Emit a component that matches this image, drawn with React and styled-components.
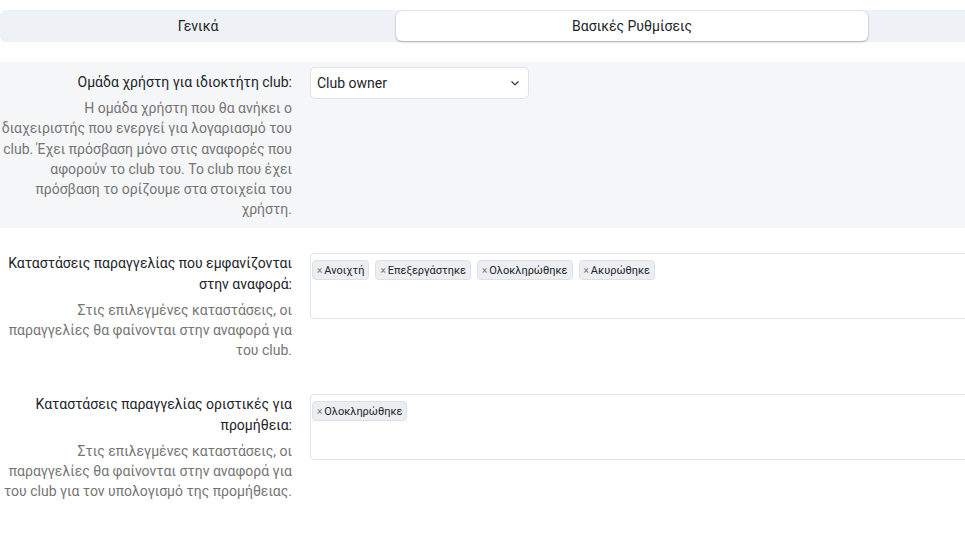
import React from 'react';
import styled, { createGlobalStyle } from 'styled-components';

const GlobalStyle = createGlobalStyle`
  *, *::before, *::after {
    box-sizing: border-box;
  }
  body {
    margin: 0;
    background: #fff;
    font-family: Roboto, "Noto Sans", Arial, sans-serif;
    color: #212529;
    overflow: hidden;
  }
`;

const Page = styled.div`
  width: 1140px;
  padding-top: 10px;
`;

const TabBar = styled.div`
  display: flex;
  background: #eef1f6;
  border-radius: 6px;
  padding: 1px 0;
  margin-bottom: 20px;
`;

const Tab = styled.div`
  width: ${({ w }) => w}px;
  flex: ${({ w }) => (w ? 'none' : '1')};
  height: 30px;
  display: flex;
  align-items: center;
  justify-content: center;
  font-size: 14px;
  color: #212529;
  border-radius: 6px;
  background: ${({ active }) => (active ? '#fff' : 'transparent')};
  box-shadow: ${({ active }) => (active ? '0 1px 2px rgba(90,100,140,0.45), 0 0 0 1px #e2e6f0' : 'none')};
`;

const Row = styled.div`
  display: grid;
  grid-template-columns: 292px 1fr;
  column-gap: 18px;
  padding: 5px 0 9px;
  margin-bottom: 20px;
  background: ${({ striped }) => (striped ? '#f5f6f8' : 'transparent')};
`;

const LabelCol = styled.div`
  text-align: right;
  padding-top: ${({ top }) => top}px;
  line-height: 20.2px;
`;

const Label = styled.div`
  font-size: 14px;
  color: #212529;
  margin-bottom: 6px;
`;

const Help = styled.div`
  font-size: 14px;
  color: #757575;
`;

const SelectBox = styled.div`
  width: 219px;
  height: 32px;
  border: 1px solid #dde2ec;
  border-radius: 5px;
  background: #fff;
  display: flex;
  align-items: center;
  justify-content: space-between;
  padding: 0 8px 0 6px;
  font-size: 14px;
  color: #212529;
`;

const TagBox = styled.div`
  height: 66px;
  border: 1px solid #dde2ec;
  border-radius: 4px;
  background: #fff;
  padding: 6px 1px;
  display: flex;
  align-items: flex-start;
  gap: 6px;
`;

const Tag = styled.span`
  display: inline-flex;
  align-items: center;
  height: 20px;
  padding: 0 4px;
  background: #eceef1;
  border: 1px solid #dde0e5;
  border-radius: 4px;
  font-size: 11px;
  color: #212529;
`;

const Remove = styled.span`
  font-size: 10px;
  color: #777;
  margin-right: 2px;
`;

const Chevron = () => (
  <svg width="10" height="10" viewBox="0 0 16 16">
    <path d="M3 6l5 5 5-5" fill="none" stroke="#343a40" strokeWidth="2" strokeLinecap="round" strokeLinejoin="round" />
  </svg>
);

function Tags({ items }) {
  return (
    <TagBox>
      {items.map((t) => (
        <Tag key={t}>
          <Remove>×</Remove>
          {t}
        </Tag>
      ))}
    </TagBox>
  );
}

export default function App() {
  return (
    <Page>
      <GlobalStyle />
      <TabBar>
        <Tab w={396}>Γενικά</Tab>
        <Tab w={472} active>Βασικές Ρυθμίσεις</Tab>
        <Tab />
      </TabBar>

      <Row striped>
        <LabelCol top={5}>
          <Label>Ομάδα χρήστη για ιδιοκτήτη club:</Label>
          <Help>
            Η ομάδα χρήστη που θα ανήκει ο διαχειριστής που ενεργεί για λογαριασμό του club. Έχει πρόσβαση
            μόνο στις αναφορές που αφορούν το club του. Το club που έχει πρόσβαση το ορίζουμε στα στοιχεία
            του χρήστη.
          </Help>
        </LabelCol>
        <div>
          <SelectBox>
            Club owner
            <Chevron />
          </SelectBox>
        </div>
      </Row>

      <Row>
        <LabelCol top={0}>
          <Label>Καταστάσεις παραγγελίας που εμφανίζονται στην αναφορά:</Label>
          <Help>Στις επιλεγμένες καταστάσεις, οι παραγγελίες θα φαίνονται στην αναφορά για του club.</Help>
        </LabelCol>
        <div>
          <Tags items={['Ανοιχτή', 'Επεξεργάστηκε', 'Ολοκληρώθηκε', 'Ακυρώθηκε']} />
        </div>
      </Row>

      <Row>
        <LabelCol top={0}>
          <Label>Καταστάσεις παραγγελίας οριστικές για προμήθεια:</Label>
          <Help>
            Στις επιλεγμένες καταστάσεις, οι παραγγελίες θα φαίνονται στην αναφορά για του club για τον
            υπολογισμό της προμήθειας.
          </Help>
        </LabelCol>
        <div>
          <Tags items={['Ολοκληρώθηκε']} />
        </div>
      </Row>
    </Page>
  );
}
